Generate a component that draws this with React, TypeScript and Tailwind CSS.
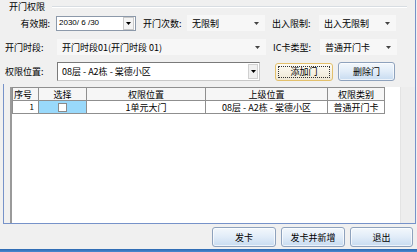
import React from "react"

function Arrow({ solid = false }: { solid?: boolean }) {
  return (
    <svg width="5" height="3" viewBox="0 0 5 3" className={solid ? "text-black" : "text-[#444]"}>
      <path d="M0 0 H5 L2.5 3 Z" fill="currentColor" />
    </svg>
  )
}

function FlatCombo({ text, className }: { text: string; className: string }) {
  return (
    <div className={`h-[16px] bg-[#f7f7f7] flex items-center pl-[5px] pr-[6px] ${className}`}>
      <span className="flex-1 whitespace-nowrap">{text}</span>
      <Arrow />
    </div>
  )
}

function WinButton({ label, className }: { label: string; className: string }) {
  return (
    <button className={`h-[19px] rounded-[3px] border border-[#8ea2bd] bg-linear-to-b from-[#f3f8fc] via-[#e1ecf8] to-[#c7dbf0] shadow-[inset_0_0_0_1px_#ffffffaa] flex items-center justify-center ${className}`}>
      {label}
    </button>
  )
}

export default function App() {
  return (
    <div className="w-[417px] h-[252px] bg-[#f0f0f0] text-[9px] leading-none text-black font-['Noto_Sans_CJK_SC',sans-serif] flex flex-col overflow-hidden">
      <div className="w-[416px] h-[224px] border-r border-[#7692c9] flex flex-col">
        {/* group title */}
        <div className="h-[13px] flex items-center pl-[9px] pr-[8px] gap-[7px]">
          <span>开门权限</span>
          <div className="flex-1 h-[2px] border-t border-[#d8dde2] border-b border-b-white" />
        </div>

        {/* row 1 */}
        <div className="mt-[2px] h-[16px] flex items-center">
          <span className="w-[50px] text-right">有效期:</span>
          <div className="ml-[6px] w-[80px] h-[15px] bg-white border border-[#8c99aa] flex items-center">
            <span className="flex-1 pl-[2px] text-[8px] font-['Liberation_Sans',sans-serif]">2030/ 6 /30</span>
            <div className="w-[11px] h-[13px] mr-[1px] border border-[#c9c9c9] bg-[#f4f4f4] flex items-center justify-center">
              <Arrow solid />
            </div>
          </div>
          <span className="ml-[7px] w-[44px] whitespace-nowrap">开门次数:</span>
          <FlatCombo text="无限制" className="w-[78px]" />
          <span className="ml-[7px] w-[47px] whitespace-nowrap">出入限制:</span>
          <FlatCombo text="出入无限制" className="w-[77px]" />
        </div>

        {/* row 2 */}
        <div className="mt-[8px] h-[16px] flex items-center">
          <span className="ml-[5px] w-[52px] whitespace-nowrap">开门时段:</span>
          <FlatCombo text="开门时段01(开门时段 01)" className="w-[209px]" />
          <span className="ml-[7px] w-[47px] whitespace-nowrap">IC卡类型:</span>
          <FlatCombo text="普通开门卡" className="w-[77px]" />
        </div>

        {/* row 3 */}
        <div className="mt-[7px] h-[19px] flex items-center">
          <span className="ml-[5px] w-[52px] whitespace-nowrap">权限位置:</span>
          <div className="w-[203px] h-[19px] bg-white border border-[#7a7a7a] border-r-[#c8c8c8] border-b-[#c8c8c8] flex items-center">
            <span className="flex-1 pl-[4px] whitespace-nowrap">08层 - A2栋 - 棠德小区</span>
            <div className="w-[10px] h-[15px] mr-[1px] bg-[#f0f0f0] border border-[#d0d0d0] flex items-center justify-center">
              <Arrow solid />
            </div>
          </div>
          <button className="ml-[15px] w-[58px] h-[18px] rounded-[3px] border border-[#e3c06c] bg-linear-to-b from-[#fdfbf4] to-[#efe8d4] p-[2px]">
            <div className="w-full h-full border border-dotted border-[#333] flex items-center justify-center">添加门</div>
          </button>
          <WinButton label="删除门" className="ml-[5px] w-[57px] h-[18px]" />
        </div>

        {/* grid panel */}
        <div className="mt-[3px] ml-[3px] flex-1 border-l border-b border-[#7692c9] flex pt-[3px] pl-[6px]">
          <div className="w-[391px] h-full bg-white border-l-2 border-[#9a9a9a] border-r border-r-[#e3e3e3]">
            <table className="border-collapse table-fixed">
              <thead>
                <tr className="h-[13px] bg-[#f6f6f6]">
                  <th className="w-[26px] border border-[#8f8f8f] font-normal text-left pl-[1px]">序号</th>
                  <th className="w-[48px] border border-[#8f8f8f] font-normal">选择</th>
                  <th className="w-[119px] border border-[#8f8f8f] font-normal">权限位置</th>
                  <th className="w-[122px] border border-[#8f8f8f] font-normal">上级位置</th>
                  <th className="w-[57px] border border-[#8f8f8f] font-normal">权限类别</th>
                </tr>
              </thead>
              <tbody>
                <tr className="h-[13px]">
                  <td className="border border-[#8f8f8f] text-right pr-[4px] text-[8px]">1</td>
                  <td className="border border-[#8f8f8f] bg-[#99d9fb]">
                    <div className="mx-auto w-[9px] h-[9px] bg-white border border-[#8a8a8a]" />
                  </td>
                  <td className="border border-[#8f8f8f] text-center">1单元大门</td>
                  <td className="border border-[#8f8f8f] text-center whitespace-nowrap">08层 - A2栋 - 棠德小区</td>
                  <td className="border border-[#8f8f8f] text-center">普通开门卡</td>
                </tr>
              </tbody>
            </table>
          </div>
          <div className="flex-1 bg-[#ededed]" />
        </div>
      </div>

      {/* bottom buttons */}
      <div className="h-[25px] flex justify-end items-start pt-[3px] pr-[4px] gap-[5px]">
        <WinButton label="发卡" className="w-[64px] h-[20px]" />
        <WinButton label="发卡并新增" className="w-[64px] h-[20px]" />
        <WinButton label="退出" className="w-[63px] h-[20px]" />
      </div>
      <div className="h-[3px] bg-linear-to-b from-[#2c68b0] to-[#4a8ad0]" />
    </div>
  )
}
